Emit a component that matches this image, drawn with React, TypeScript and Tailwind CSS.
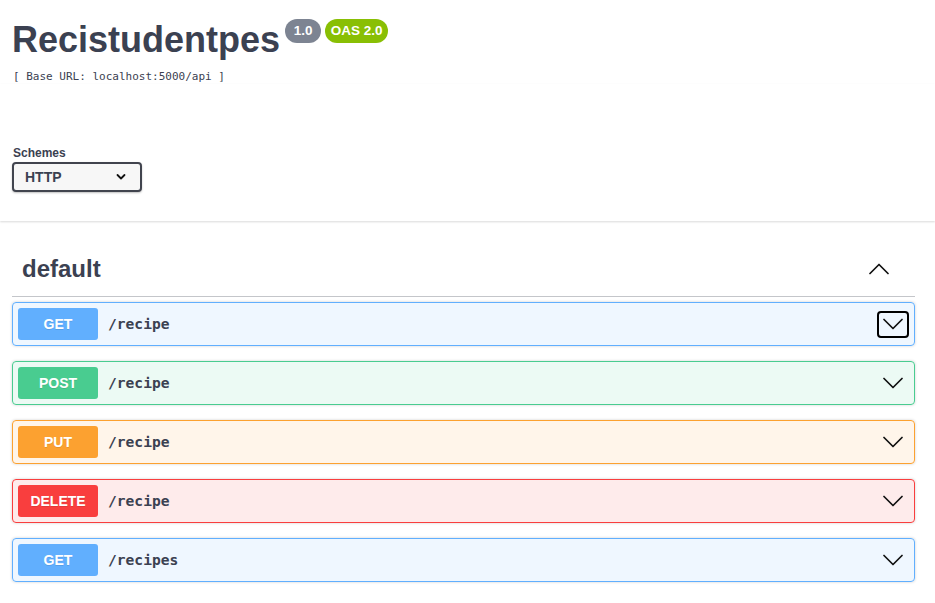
import React from "react";

const ops = [
  { m: "GET", p: "/recipe", c: "#61affe", bg: "rgba(97,175,254,0.1)", focus: true },
  { m: "POST", p: "/recipe", c: "#49cc90", bg: "rgba(73,204,144,0.1)" },
  { m: "PUT", p: "/recipe", c: "#fca130", bg: "rgba(252,161,48,0.1)" },
  { m: "DELETE", p: "/recipe", c: "#f93e3e", bg: "rgba(249,62,62,0.1)" },
  { m: "GET", p: "/recipes", c: "#61affe", bg: "rgba(97,175,254,0.1)" },
];

function ChevronDown() {
  return (
    <svg width="20" height="20" viewBox="0 0 20 20" fill="none">
      <polyline points="1,5.5 10,14.5 19,5.5" stroke="#111" strokeWidth="1.7" strokeLinecap="round" strokeLinejoin="round" />
    </svg>
  );
}

function ChevronUp() {
  return (
    <svg width="20" height="20" viewBox="0 0 20 20" fill="none">
      <polyline points="1,14.5 10,5.5 19,14.5" stroke="#111" strokeWidth="1.7" strokeLinecap="round" strokeLinejoin="round" />
    </svg>
  );
}

export default function App() {
  return (
    <div className="min-h-screen bg-white text-[#3b4151] font-['Liberation_Sans',Arial,sans-serif]">
      <div className="pl-[12px] pr-[20px]">
        <div className="flex items-start pt-[19px]">
          <h2 className="mt-[3px] text-[36px] leading-[36px] font-bold text-[#3b4151]">Recistudentpes</h2>
          <span className="ml-[5px] h-[24px] w-[36px] rounded-full bg-[#7d8492] text-white text-[13.5px] font-bold flex items-center justify-center">1.0</span>
          <span className="ml-[4px] h-[24px] w-[63px] rounded-full bg-[#89bf04] text-white text-[13.5px] font-bold flex items-center justify-center">OAS 2.0</span>
        </div>
        <pre className="mt-[12px] pl-[1px] text-[11px] leading-[14px] font-['DejaVu_Sans_Mono',monospace] text-[#3b4151]">[ Base URL: localhost:5000/api ]</pre>
      </div>

      <div className="pl-[12px] pr-[20px] pt-[62px] pb-[29px] bg-white shadow-[0_1px_2px_0_rgba(0,0,0,0.15)]">
        <div className="pl-[1px] text-[12px] leading-[14px] font-bold">Schemes</div>
        <div className="mt-[2px] w-[130px] h-[30px] border-2 border-[#41444e] rounded-[4px] bg-[#f7f7f7] shadow-[0_1px_2px_0_rgba(0,0,0,0.25)] flex items-center justify-between pl-[11px] pr-[14px]">
          <span className="text-[14px] font-bold">HTTP</span>
          <svg width="10" height="10" viewBox="0 0 10 10" fill="none">
            <polyline points="1.5,3 5,6.5 8.5,3" stroke="#111" strokeWidth="1.8" strokeLinecap="round" strokeLinejoin="round" />
          </svg>
        </div>
      </div>

      <div className="pl-[12px] pr-[20px] mt-[20px]">
        <div className="h-[56px] flex items-center justify-between pl-[10px] pr-[26px] border-b border-[rgba(59,65,81,0.3)]">
          <h3 className="text-[24px] leading-[30px] font-bold">default</h3>
          <ChevronUp />
        </div>
        <div className="pt-[5px]">
          {ops.map((o, i) => (
            <div
              key={i}
              className="mb-[15px] h-[44px] rounded-[4px] border flex items-center p-[5px] shadow-[0_0_3px_rgba(0,0,0,0.19)]"
              style={{ borderColor: o.c, background: o.bg }}
            >
              <div
                className="w-[80px] h-[32px] rounded-[3px] flex items-center justify-center text-white text-[14px] font-bold [text-shadow:0_1px_0_rgba(0,0,0,0.1)]"
                style={{ background: o.c }}
              >
                {o.m}
              </div>
              <div className="ml-[10px] flex-1 font-['DejaVu_Sans_Mono',monospace] font-bold text-[14.6px] text-[#3b4151]">{o.p}</div>
              <div
                className={
                  "w-[32px] h-[27px] rounded-[4px] flex items-center justify-center border-2 " +
                  (o.focus ? "border-black" : "border-transparent")
                }
              >
                <ChevronDown />
              </div>
            </div>
          ))}
        </div>
      </div>
    </div>
  );
}
